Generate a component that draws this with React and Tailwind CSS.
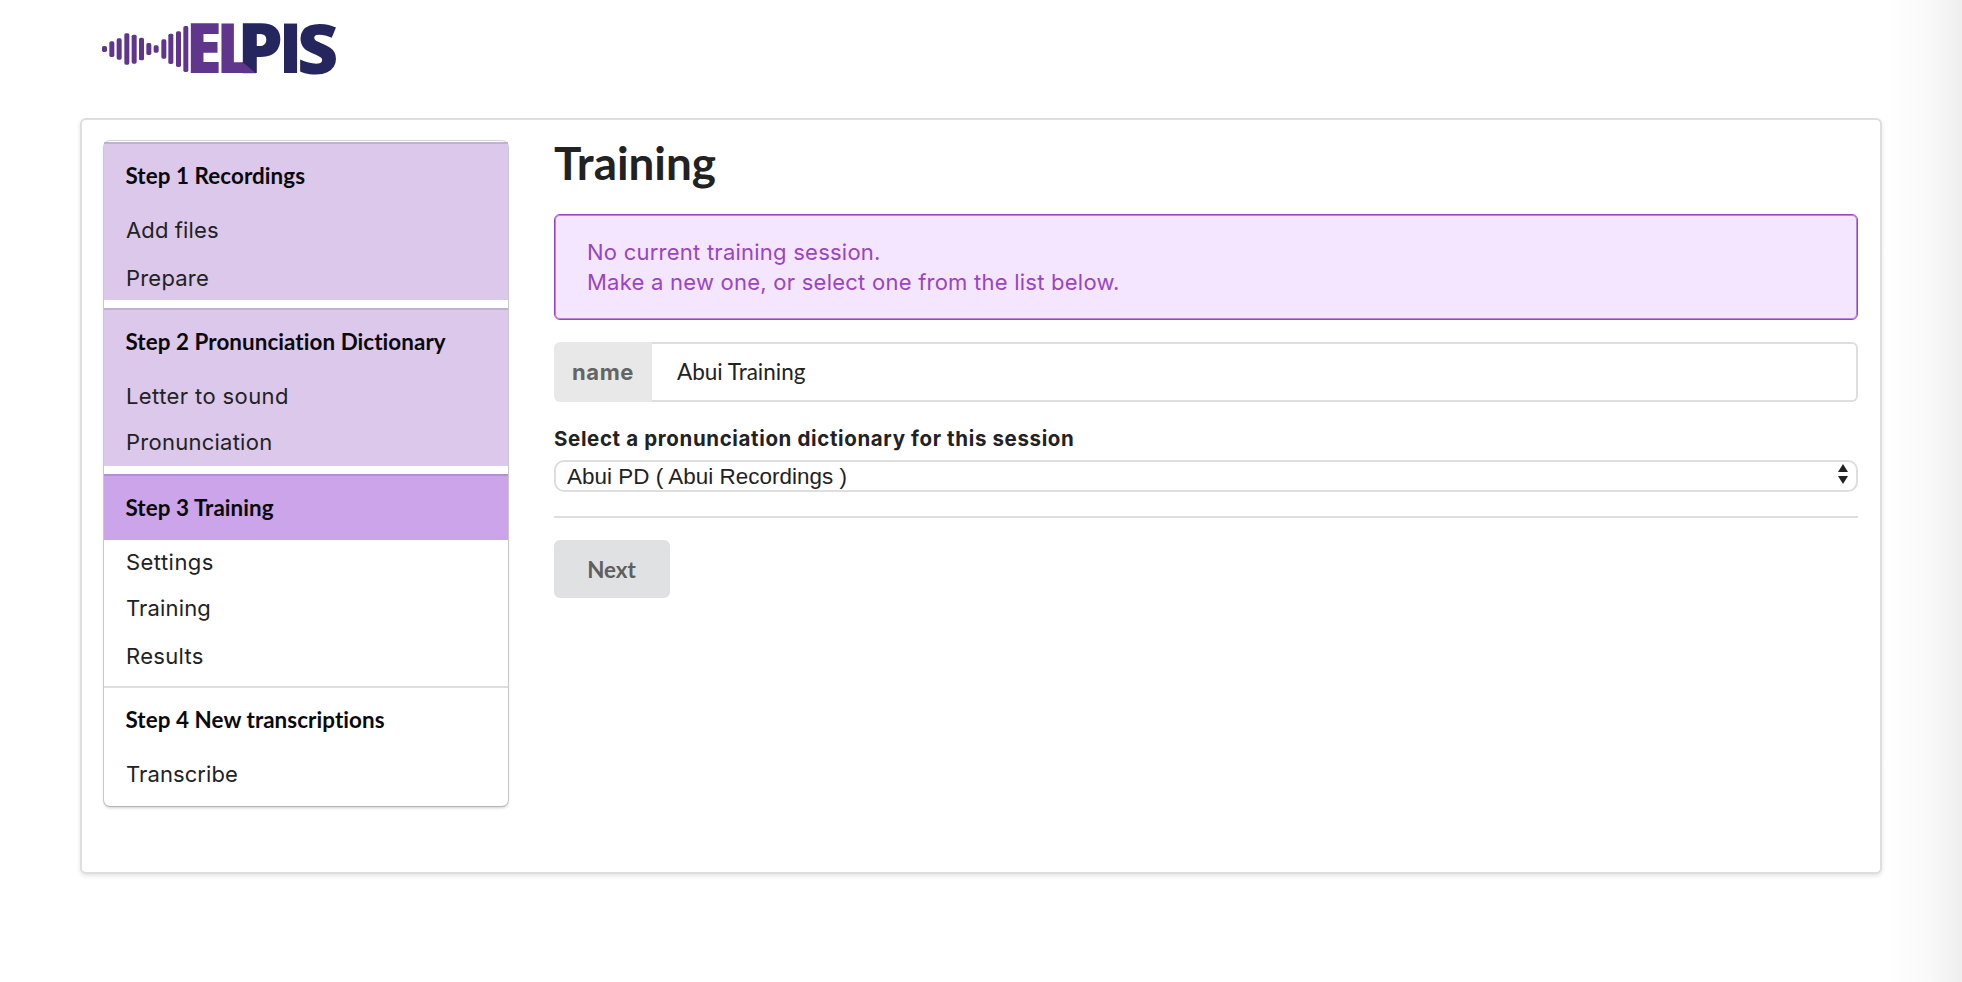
import React from "react";

const bars = [
  [66, 138, 156], [88, 124, 171], [110, 115, 179], [133, 100, 194], [155, 104, 191], [177, 113, 181],
  [199, 129, 165], [221, 136, 158], [244, 118, 176], [265, 101, 192], [288, 94, 201], [310, 78, 216],
];

function Logo() {
  return (
    <svg width="280" height="98" viewBox="0 0 840 294" className="block shrink-0" role="img" aria-label="ELPIS">
      {bars.map(([x, top, bottom]) => (
        <rect key={x} x={x} y={top} width="15" height={bottom - top} rx="5" fill="#60368c" />
      ))}
      <g className="font-['Open_Sans'] text-[100px] font-extrabold">
        <text transform="translate(317.5 220) scale(1.97 2.07)" fill="#60368c">E</text>
        <text transform="translate(409.5 220) scale(1.93 2.07)" fill="#60368c">L</text>
        <text transform="translate(472 220) scale(2.17 2.07)" fill="#25265e">P</text>
        <text transform="translate(596 220) scale(2.03 2.07)" fill="#25265e">I</text>
        <text transform="translate(651 221.5) scale(2.15 2.09)" fill="#25265e">S</text>
      </g>
      <polygon points="488,187 528,220 488,220" fill="#60368c" />
    </svg>
  );
}

function Item({ height, tracking, children }) {
  return (
    <div className={`flex items-center pl-[22px] font-[Inter] text-[22px] leading-[28px] text-[#222223] ${height} ${tracking}`}>
      {children}
    </div>
  );
}

function Title({ children, className }) {
  return (
    <div className={`flex h-[66px] items-center border-t-2 pl-[21.5px] font-[Lato] text-[22.4px] leading-[28px] font-bold tracking-[0.07px] text-[#0a0a0b] [font-variant-ligatures:none] ${className}`}>
      {children}
    </div>
  );
}

function Sidebar() {
  return (
    <nav className="mt-[21px] ml-[22px] h-[665px] w-[404px] shrink-0 rounded-[6px] bg-white pt-px shadow-[0_0_0_1px_rgba(34,36,38,0.18),0_2px_3px_0_rgba(34,36,38,0.22)]">
      <div className="h-[158px] bg-[#dcc8ea]">
        <Title className="border-[#c1b0d0]">Step 1 Recordings</Title>
        <Item height="h-[44px]" tracking="tracking-[0.12px]">Add files</Item>
        <Item height="h-[52px]" tracking="tracking-[0.2px]">Prepare</Item>
      </div>
      <div className="mt-2 h-[158px] bg-[#dcc8ea]">
        <Title className="border-[#c1b0d0]">Step 2 Pronunciation Dictionary</Title>
        <Item height="h-[44px]" tracking="tracking-[0.4px]">Letter to sound</Item>
        <Item height="h-[48px]" tracking="tracking-[0.25px]">Pronunciation</Item>
      </div>
      <div className="mt-2">
        <Title className="border-[#b18fd0] bg-[#cba4ea]">Step 3 Training</Title>
        <Item height="h-[44px]" tracking="tracking-[0.45px]">Settings</Item>
        <Item height="h-[48px]" tracking="tracking-[0.15px]">Training</Item>
        <Item height="h-[48px]" tracking="tracking-[0.3px]">Results</Item>
      </div>
      <div className="mt-[6px]">
        <Title className="border-[#dedede]">Step 4 New transcriptions</Title>
        <Item height="h-[44px]" tracking="tracking-[0.1px]">Transcribe</Item>
      </div>
    </nav>
  );
}

function Content() {
  return (
    <main className="ml-[46px] flex w-[1304px] flex-col font-[Inter]">
      <h1 className="mt-[14px] h-[80px] font-[Lato] text-[45.8px] leading-[58px] font-bold text-[#222223]">Training</h1>
      <div className="h-[106px] rounded-[6px] border border-[#9a44c4] bg-[#f4e6fe] text-[22px] leading-[30px] tracking-[0.24px] text-[#9a44c4] shadow-[inset_0_0_0_1px_#bb82d9]">
        <p className="mt-[22px] ml-[32px]">No current training session.</p>
        <p className="ml-[32px]">Make a new one, or select one from the list below.</p>
      </div>
      <div className="mt-[22px] flex h-[60px]">
        <label className="flex w-[98px] items-center justify-center rounded-l-[6px] bg-[#e8e8e8] text-[22px] font-bold tracking-[0.6px] text-[#646465]">name</label>
        <div className="flex grow items-center rounded-r-[6px] border-2 border-l-0 border-[#dedede] pl-[25px] font-[Lato] text-[22.5px] text-[#222223]">Abui Training</div>
      </div>
      <div className="mt-[24px] h-[34px] text-[20.5px] leading-[26px] font-bold tracking-[0.63px] text-[#222223]">Select a pronunciation dictionary for this session</div>
      <div className="flex h-[32px] items-center justify-between rounded-[10px] border-2 border-[#dedede] pr-[8px] pl-[11px] font-['Liberation_Sans'] text-[22.4px] leading-[28px] tracking-[0.05px] text-[#222223]">
        <span className="pt-0.5">Abui PD ( Abui Recordings )</span>
        <svg width="10" height="20" viewBox="0 0 10 20" className="mb-1" fill="#222223">
          <path d="M5 0L10 8H0Z" />
          <path d="M0 12H10L5 20Z" />
        </svg>
      </div>
      <hr className="mt-6 border-t-2 border-[#dedede]" />
      <button className="mt-[22px] flex h-[58px] w-[116px] items-center justify-center rounded-[6px] bg-[#e0e1e2] pt-0.5 pr-px font-[Lato] text-[22.4px] font-bold text-[#5f5f60]">Next</button>
    </main>
  );
}

export default function App() {
  return (
    <div className="h-[982px] w-[1962px] overflow-hidden bg-[linear-gradient(to_right,#ffffff_1885px,#f9f9f9_1930px,#eeeeee_1962px)] antialiased">
      <header className="ml-20 h-[118px]">
        <Logo />
      </header>
      <div className="ml-20 flex h-[756px] w-[1802px] items-start rounded-[6px] border-2 border-[#dedede] bg-white shadow-[0_2px_4px_0_rgba(34,36,38,0.12)]">
        <Sidebar />
        <Content />
      </div>
    </div>
  );
}
